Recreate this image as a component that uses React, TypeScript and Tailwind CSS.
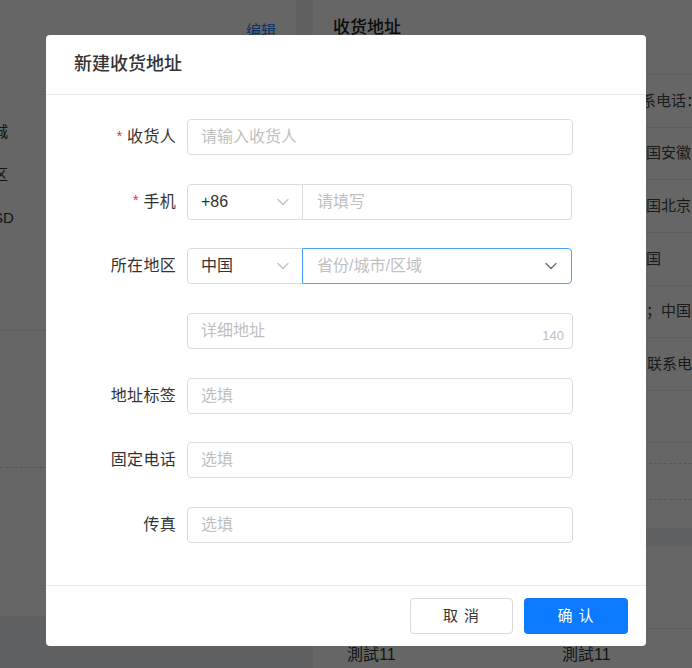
import React from "react";

const Chevron = ({ className }: { className?: string }) => (
  <svg viewBox="0 0 12 8" className={className} fill="none" stroke="currentColor" strokeWidth="1.2" strokeLinecap="round" strokeLinejoin="round">
    <path d="M1 1.5 L6 6.5 L11 1.5" />
  </svg>
);

const Label = ({ text, required }: { text: string; required?: boolean }) => (
  <div className="w-[130px] shrink-0 flex items-center justify-end text-[16px] text-[#333]">
    {required && <span className="text-[#f5222d] text-[14px] mr-[5px] relative -top-[1px]">*</span>}
    <span className="tracking-[0.3px]">{text}</span>
  </div>
);

const Field = ({ placeholder, children }: { placeholder: string; children?: React.ReactNode }) => (
  <div className="relative ml-[11px] w-[386px] h-[36px] border border-[#dcdcdc] rounded-[4px] flex items-center px-[13px] text-[16px] text-[#bfbfbf]">
    {placeholder}
    {children}
  </div>
);

export default function App() {
  const rightRows = [
    { t: "联系电话：", pad: "pl-[313px]" },
    { t: "中国安徽", pad: "pl-[318px]" },
    { t: "中国北京", pad: "pl-[318px]" },
    { t: "中国", pad: "pl-[318px]" },
    { t: "址；中国", pad: "pl-[318px]" },
    { t: "，联系电话", pad: "pl-[319px]" },
  ];
  return (
    <div className="relative w-[692px] h-[668px] overflow-hidden bg-[#f0f2f5] font-['Liberation_Sans','Noto_Sans_CJK_SC',sans-serif]">
      {/* background page */}
      <div className="flex h-full">
        <div className="w-[296px] h-[616px] bg-white flex flex-col shrink-0">
          <div className="h-[60px] flex justify-end pr-[20px] pt-[22px] text-[15px] leading-[18px] text-[#1677ff]">编辑</div>
          <div className="mt-[50px] -ml-[7px] flex flex-col text-[15px] text-[#333]">
            <div className="h-[43px] leading-[43px]">城</div>
            <div className="h-[43px] leading-[43px]">区</div>
            <div className="h-[43px] leading-[43px]">SD</div>
          </div>
          <div className="mt-[91px] border-t border-[#e8e8e8]" />
          <div className="mt-[136px] border-t border-dashed border-[#d9d9d9]" />
        </div>
        <div className="ml-[17px] flex-1 flex flex-col">
          <div className="h-[528px] bg-white flex flex-col">
            <div className="h-[75px] pl-[20px] pt-[17px] text-[17px] leading-[22px] font-medium text-[#222] border-b border-[#e8e8e8]">收货地址</div>
            {rightRows.map((r, i) => (
              <div key={i} className={`h-[52.7px] border-b border-[#e8e8e8] flex items-center ${r.pad} text-[15px] text-[#444] whitespace-nowrap`}>
                {r.t}
              </div>
            ))}
            <div className="h-[52px] border-b border-[#e8e8e8]" />
            <div className="mt-[20px] border-t border-dashed border-[#d9d9d9]" />
            <div className="mt-[35px] border-t border-dashed border-[#d9d9d9]" />
          </div>
          <div className="mt-[19px] flex-1 bg-white flex flex-col">
            <div className="h-[82px] border-b border-[#e8e8e8]" />
            <div className="flex pl-[34px] pt-[14px] text-[16px] text-[#333]">
              <div className="w-[215px]">測試11</div>
              <div>測試11</div>
            </div>
          </div>
        </div>
      </div>

      {/* overlay */}
      <div className="absolute inset-0 bg-black/60 flex justify-center pt-[35px]">
        <div className="w-[600px] h-[611px] bg-white rounded-[4px] flex flex-col">
          <div className="h-[60px] shrink-0 border-b border-[#e8e8e8] flex items-center pl-[28px] text-[18px] font-medium text-[#333]">
            新建收货地址
          </div>
          <div className="flex-1 pt-[24px] flex flex-col gap-[28.67px]">
            <div className="flex h-[36px]">
              <Label text="收货人" required />
              <Field placeholder="请输入收货人" />
            </div>
            <div className="flex h-[36px]">
              <Label text="手机" required />
              <div className="ml-[11px] w-[385px] h-[36px] flex">
                <div className="w-[116px] h-full border border-[#dcdcdc] rounded-l-[4px] flex items-center justify-between pl-[13px] pr-[13px] text-[16px] text-[#333]">
                  <span>+86</span>
                  <Chevron className="w-[12px] h-[8px] text-[#c0c0c0]" />
                </div>
                <div className="flex-1 h-full border border-l-0 border-[#dcdcdc] rounded-r-[4px] flex items-center pl-[14px] text-[16px] text-[#bfbfbf]">
                  请填写
                </div>
              </div>
            </div>
            <div className="flex h-[36px]">
              <Label text="所在地区" />
              <div className="ml-[11px] w-[385px] h-[36px] flex">
                <div className="w-[116px] h-full border border-[#dcdcdc] rounded-l-[4px] flex items-center justify-between pl-[13px] pr-[13px] text-[16px] text-[#333]">
                  <span>中国</span>
                  <Chevron className="w-[12px] h-[8px] text-[#c0c0c0]" />
                </div>
                <div className="flex-1 -ml-px h-full border border-[#4aa3ff] rounded-r-[4px] flex items-center justify-between pl-[14px] pr-[14px] text-[16px] text-[#bfbfbf]">
                  <span>省份/城市/区域</span>
                  <Chevron className="w-[12px] h-[8px] text-[#666]" />
                </div>
              </div>
            </div>
            <div className="flex h-[36px]">
              <div className="w-[130px] shrink-0" />
              <Field placeholder="详细地址">
                <span className="absolute right-[8px] bottom-[5px] text-[13px] leading-[14px] text-[#bfbfbf]">140</span>
              </Field>
            </div>
            <div className="flex h-[36px]">
              <Label text="地址标签" />
              <Field placeholder="选填" />
            </div>
            <div className="flex h-[36px]">
              <Label text="固定电话" />
              <Field placeholder="选填" />
            </div>
            <div className="flex h-[36px]">
              <Label text="传真" />
              <Field placeholder="选填" />
            </div>
          </div>
          <div className="h-[61px] shrink-0 border-t border-[#e8e8e8] flex items-center justify-end pr-[18px] gap-[11px]">
            <button className="w-[103px] h-[36px] border border-[#d9d9d9] rounded-[4px] bg-white text-[15px] text-[#333] tracking-[1px]">取 消</button>
            <button className="w-[104px] h-[36px] rounded-[4px] bg-[#0b7aff] text-[15px] text-white tracking-[1px]">确 认</button>
          </div>
        </div>
      </div>
    </div>
  );
}
